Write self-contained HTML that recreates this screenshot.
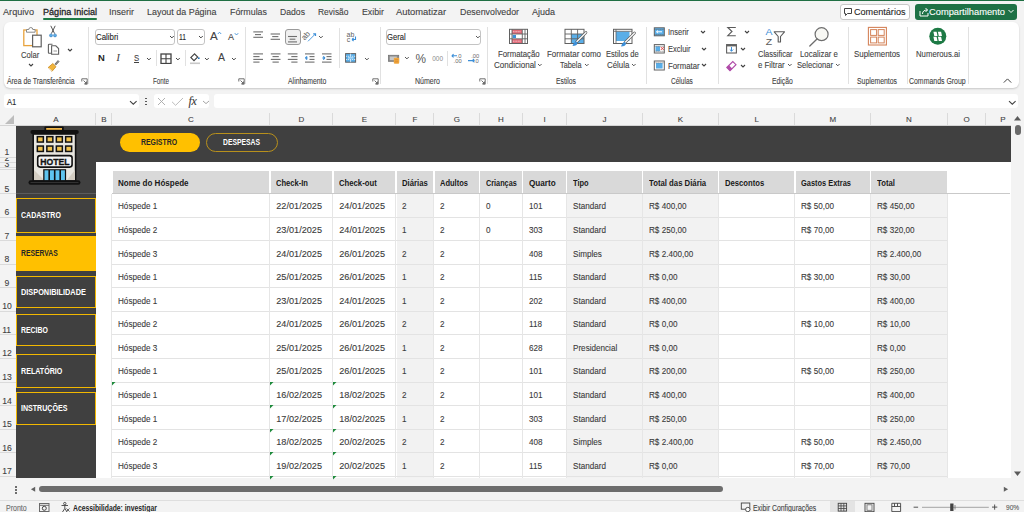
<!DOCTYPE html>
<html><head><meta charset="utf-8"><style>
html,body{margin:0;padding:0;}
body{width:1024px;height:512px;overflow:hidden;position:relative;background:#f3f3f3;font-family:"Liberation Sans",sans-serif;}
body div, body svg{position:absolute;box-sizing:border-box;}
.t{white-space:nowrap;transform-origin:0 0;-webkit-text-stroke:0.1px currentColor;}
</style></head><body>
<div style="left:0px;top:0px;width:1024px;height:1px;background:#1f6f43;"></div>
<div class="t" style="left:3.00px;top:7.78px;font-size:9px;line-height:9px;color:#424242;transform:scaleX(1.0159);">Arquivo</div>
<div class="t" style="left:43.00px;top:7.78px;font-size:9px;line-height:9px;color:#262626;transform:scaleX(1.0087);-webkit-text-stroke:0.3px #262626;">Página Inicial</div>
<div class="t" style="left:109.00px;top:7.78px;font-size:9px;line-height:9px;color:#424242;">Inserir</div>
<div class="t" style="left:147.00px;top:7.78px;font-size:9px;line-height:9px;color:#424242;transform:scaleX(0.9920);">Layout da Página</div>
<div class="t" style="left:230.00px;top:7.78px;font-size:9px;line-height:9px;color:#424242;transform:scaleX(0.9865);">Fórmulas</div>
<div class="t" style="left:280.00px;top:7.78px;font-size:9px;line-height:9px;color:#424242;transform:scaleX(0.9610);">Dados</div>
<div class="t" style="left:318.00px;top:7.78px;font-size:9px;line-height:9px;color:#424242;transform:scaleX(0.9380);">Revisão</div>
<div class="t" style="left:361.50px;top:7.78px;font-size:9px;line-height:9px;color:#424242;transform:scaleX(0.9776);">Exibir</div>
<div class="t" style="left:396.00px;top:7.78px;font-size:9px;line-height:9px;color:#424242;transform:scaleX(1.0413);">Automatizar</div>
<div class="t" style="left:460.00px;top:7.78px;font-size:9px;line-height:9px;color:#424242;transform:scaleX(0.9828);">Desenvolvedor</div>
<div class="t" style="left:532.00px;top:7.78px;font-size:9px;line-height:9px;color:#424242;">Ajuda</div>
<div style="left:43px;top:18px;width:54px;height:2px;background:#1f7a45;border-radius:1px;"></div>
<div style="left:840px;top:3.5px;width:70px;height:16px;background:#fff;border:1px solid #c8c8c8;border-radius:3px;"></div>
<svg style="left:843px;top:7px;" width="10" height="10" viewBox="0 0 10 10"><path d="M1.5 1.5h7v5h-4l-2 2v-2h-1z" fill="none" stroke="#424242" stroke-width="1"/></svg>
<div class="t" style="left:853.50px;top:7.78px;font-size:9px;line-height:9px;color:#262626;transform:scaleX(1.0094);">Comentários</div>
<div style="left:915px;top:3.5px;width:101.5px;height:16px;background:#1e7145;border-radius:3px;"></div>
<svg style="left:918px;top:6px;" width="12" height="12" viewBox="0 0 12 12"><path d="M2 5v5h8V7" fill="none" stroke="#fff" stroke-width="1"/><path d="M4.5 8c0-3 2-4 5-4M7.5 2l2 2-2 2" fill="none" stroke="#fff" stroke-width="1"/></svg>
<div class="t" style="left:929.00px;top:7.78px;font-size:9px;line-height:9px;color:#ffffff;transform:scaleX(1.0335);">Compartilhamento</div>
<svg style="left:1008px;top:9px;" width="6" height="5" viewBox="0 0 6 5"><path d="M0.5 1l2.5 2.5 2.5-2.5" fill="none" stroke="#fff" stroke-width="1"/></svg>
<div style="left:3.5px;top:22px;width:1015px;height:66px;background:#fff;border-radius:6px;box-shadow:0 1px 2px rgba(0,0,0,0.18);"></div>
<div style="left:88px;top:27px;width:1px;height:57px;background:#e1e1e1;"></div>
<div style="left:245px;top:27px;width:1px;height:57px;background:#e1e1e1;"></div>
<div style="left:379.5px;top:27px;width:1px;height:57px;background:#e1e1e1;"></div>
<div style="left:486.5px;top:27px;width:1px;height:57px;background:#e1e1e1;"></div>
<div style="left:645.5px;top:27px;width:1px;height:57px;background:#e1e1e1;"></div>
<div style="left:717.5px;top:27px;width:1px;height:57px;background:#e1e1e1;"></div>
<div style="left:847.5px;top:27px;width:1px;height:57px;background:#e1e1e1;"></div>
<div style="left:907px;top:27px;width:1px;height:57px;background:#e1e1e1;"></div>
<div style="left:968px;top:27px;width:1px;height:57px;background:#e1e1e1;"></div>
<div style="left:156px;top:50px;width:1px;height:16px;background:#e1e1e1;"></div>
<div style="left:185px;top:50px;width:1px;height:16px;background:#e1e1e1;"></div>
<div style="left:338.5px;top:28px;width:1px;height:40px;background:#e1e1e1;"></div>
<div style="left:447px;top:51px;width:1px;height:15px;background:#e1e1e1;"></div>
<div class="t" style="left:7.00px;top:77.30px;font-size:8.5px;line-height:8.5px;color:#424242;transform:scaleX(0.8086);">Área de Transferência</div>
<div class="t" style="left:153.00px;top:77.30px;font-size:8.5px;line-height:8.5px;color:#424242;transform:scaleX(0.7361);">Fonte</div>
<div class="t" style="left:287.70px;top:77.30px;font-size:8.5px;line-height:8.5px;color:#424242;transform:scaleX(0.8105);">Alinhamento</div>
<div class="t" style="left:415.00px;top:77.30px;font-size:8.5px;line-height:8.5px;color:#424242;transform:scaleX(0.8270);">Número</div>
<div class="t" style="left:556.00px;top:77.30px;font-size:8.5px;line-height:8.5px;color:#424242;transform:scaleX(0.7989);">Estilos</div>
<div class="t" style="left:670.50px;top:77.30px;font-size:8.5px;line-height:8.5px;color:#424242;transform:scaleX(0.7690);">Células</div>
<div class="t" style="left:772.00px;top:77.30px;font-size:8.5px;line-height:8.5px;color:#424242;transform:scaleX(0.8003);">Edição</div>
<div class="t" style="left:857.00px;top:77.30px;font-size:8.5px;line-height:8.5px;color:#424242;transform:scaleX(0.8062);">Suplementos</div>
<div class="t" style="left:909.30px;top:77.30px;font-size:8.5px;line-height:8.5px;color:#424242;transform:scaleX(0.8165);">Commands Group</div>
<div style="left:4px;top:93.9px;width:134.6px;height:14.2px;background:#fff;border-radius:3px;"></div>
<div class="t" style="left:6.80px;top:97.47px;font-size:9.6px;line-height:9.6px;color:#262626;transform:scaleX(0.8005);">A1</div>
<svg style="left:129px;top:99.5px;" width="9" height="6" viewBox="0 0 9 6"><path d="M1 1.2L4.3 4.2 7.6 1.2" fill="none" stroke="#424242" stroke-width="1.1"/></svg>
<div style="left:145.1px;top:97.7px;width:1.7px;height:1.7px;background:#424242;border-radius:1px;"></div>
<div style="left:145.1px;top:100.7px;width:1.7px;height:1.7px;background:#424242;border-radius:1px;"></div>
<div style="left:145.1px;top:103.7px;width:1.7px;height:1.7px;background:#424242;border-radius:1px;"></div>
<div style="left:154px;top:93.9px;width:55px;height:14.2px;background:#fff;border-radius:3px;"></div>
<svg style="left:157px;top:96.8px;" width="9" height="9" viewBox="0 0 9 9"><path d="M1 1L8 8M8 1L1 8" stroke="#a8a8a8" stroke-width="0.9"/></svg>
<svg style="left:171px;top:96.5px;" width="13" height="9.5" viewBox="0 0 13 9.5"><path d="M1 4.8L4.6 8.3 12 1" fill="none" stroke="#b4b4b4" stroke-width="0.9"/></svg>
<div class="t" style="left:188.5px;top:95.2px;font-family:'Liberation Serif',serif;font-style:italic;font-size:12px;line-height:12px;color:#3a3a3a;letter-spacing:-0.3px;">fx</div>
<svg style="left:201.5px;top:100px;" width="8" height="5" viewBox="0 0 8 5"><path d="M1 1L4 3.6 7 1" fill="none" stroke="#9a9a9a" stroke-width="0.9"/></svg>
<div style="left:213.8px;top:93.9px;width:804.7px;height:14.2px;background:#fff;border-radius:3px;"></div>
<svg style="left:1008px;top:99.5px;" width="9" height="6" viewBox="0 0 9 6"><path d="M1 1.2L4.3 4.2 7.6 1.2" fill="none" stroke="#424242" stroke-width="1.1"/></svg>
<div style="left:0px;top:112px;width:1012px;height:13.5px;background:#f3f3f3;"></div>
<div style="left:95.4px;top:113px;width:1px;height:12px;background:#dadada;"></div>
<div class="t" style="left:53.33px;top:116.33px;font-size:8px;line-height:8px;color:#424242;">A</div>
<div style="left:111.4px;top:113px;width:1px;height:12px;background:#dadada;"></div>
<div class="t" style="left:101.33px;top:116.33px;font-size:8px;line-height:8px;color:#424242;">B</div>
<div style="left:269.4px;top:113px;width:1px;height:12px;background:#dadada;"></div>
<div class="t" style="left:188.11px;top:116.33px;font-size:8px;line-height:8px;color:#424242;">C</div>
<div style="left:332.4px;top:113px;width:1px;height:12px;background:#dadada;"></div>
<div class="t" style="left:298.61px;top:116.33px;font-size:8px;line-height:8px;color:#424242;">D</div>
<div style="left:395.4px;top:113px;width:1px;height:12px;background:#dadada;"></div>
<div class="t" style="left:361.83px;top:116.33px;font-size:8px;line-height:8px;color:#424242;">E</div>
<div style="left:433.4px;top:113px;width:1px;height:12px;background:#dadada;"></div>
<div class="t" style="left:412.56px;top:116.33px;font-size:8px;line-height:8px;color:#424242;">F</div>
<div style="left:478.9px;top:113px;width:1px;height:12px;background:#dadada;"></div>
<div class="t" style="left:453.64px;top:116.33px;font-size:8px;line-height:8px;color:#424242;">G</div>
<div style="left:521.9px;top:113px;width:1px;height:12px;background:#dadada;"></div>
<div class="t" style="left:498.11px;top:116.33px;font-size:8px;line-height:8px;color:#424242;">H</div>
<div style="left:565.9px;top:113px;width:1px;height:12px;background:#dadada;"></div>
<div class="t" style="left:543.39px;top:116.33px;font-size:8px;line-height:8px;color:#424242;">I</div>
<div style="left:641.9px;top:113px;width:1px;height:12px;background:#dadada;"></div>
<div class="t" style="left:602.50px;top:116.33px;font-size:8px;line-height:8px;color:#424242;">J</div>
<div style="left:717.9px;top:113px;width:1px;height:12px;background:#dadada;"></div>
<div class="t" style="left:677.83px;top:116.33px;font-size:8px;line-height:8px;color:#424242;">K</div>
<div style="left:794.4px;top:113px;width:1px;height:12px;background:#dadada;"></div>
<div class="t" style="left:754.53px;top:116.33px;font-size:8px;line-height:8px;color:#424242;">L</div>
<div style="left:869.9px;top:113px;width:1px;height:12px;background:#dadada;"></div>
<div class="t" style="left:829.42px;top:116.33px;font-size:8px;line-height:8px;color:#424242;">M</div>
<div style="left:946.9px;top:113px;width:1px;height:12px;background:#dadada;"></div>
<div class="t" style="left:906.11px;top:116.33px;font-size:8px;line-height:8px;color:#424242;">N</div>
<div style="left:984.9px;top:113px;width:1px;height:12px;background:#dadada;"></div>
<div class="t" style="left:963.39px;top:116.33px;font-size:8px;line-height:8px;color:#424242;">O</div>
<div style="left:1023.4px;top:113px;width:1px;height:12px;background:#dadada;"></div>
<div class="t" style="left:1000.33px;top:116.33px;font-size:8px;line-height:8px;color:#424242;">P</div>
<div style="left:0px;top:125px;width:1012px;height:1px;background:#d4d4d4;"></div>
<svg style="left:4px;top:114px;" width="11" height="10" viewBox="0 0 11 10"><path d="M10 1L10 10L1 10Z" fill="#bdbdbd"/></svg>
<div style="left:16px;top:125.5px;width:995px;height:352.5px;background:#fff;"></div>
<div style="left:0px;top:125.5px;width:16px;height:352.5px;background:#f3f3f3;"></div>
<div style="left:0px;top:157px;width:16px;height:1px;background:#dadada;"></div>
<div style="left:0px;top:162px;width:16px;height:1px;background:#dadada;"></div>
<div style="left:0px;top:168.5px;width:16px;height:1px;background:#dadada;"></div>
<div style="left:0px;top:193px;width:16px;height:1px;background:#dadada;"></div>
<div style="left:0px;top:216.57999999999998px;width:16px;height:1px;background:#dadada;"></div>
<div style="left:0px;top:240.16px;width:16px;height:1px;background:#dadada;"></div>
<div style="left:0px;top:263.74px;width:16px;height:1px;background:#dadada;"></div>
<div style="left:0px;top:287.32px;width:16px;height:1px;background:#dadada;"></div>
<div style="left:0px;top:310.9px;width:16px;height:1px;background:#dadada;"></div>
<div style="left:0px;top:334.48px;width:16px;height:1px;background:#dadada;"></div>
<div style="left:0px;top:358.06px;width:16px;height:1px;background:#dadada;"></div>
<div style="left:0px;top:381.64px;width:16px;height:1px;background:#dadada;"></div>
<div style="left:0px;top:405.21999999999997px;width:16px;height:1px;background:#dadada;"></div>
<div style="left:0px;top:428.79999999999995px;width:16px;height:1px;background:#dadada;"></div>
<div style="left:0px;top:452.38px;width:16px;height:1px;background:#dadada;"></div>
<div style="left:0px;top:475.96px;width:16px;height:1px;background:#dadada;"></div>
<div style="left:0px;top:167px;width:16px;height:1px;background:#dadada;"></div>
<div style="left:15.5px;top:125.5px;width:1px;height:352.5px;background:#d4d4d4;"></div>
<div class="t" style="left:4.61px;top:148.12px;font-size:8.6px;line-height:8.6px;color:#424242;">1</div>
<div class="t" style="left:4.61px;top:184.92px;font-size:8.6px;line-height:8.6px;color:#424242;">5</div>
<div class="t" style="left:4.61px;top:208.00px;font-size:8.6px;line-height:8.6px;color:#424242;">6</div>
<div class="t" style="left:4.61px;top:231.58px;font-size:8.6px;line-height:8.6px;color:#424242;">7</div>
<div class="t" style="left:4.61px;top:255.16px;font-size:8.6px;line-height:8.6px;color:#424242;">8</div>
<div class="t" style="left:4.61px;top:278.74px;font-size:8.6px;line-height:8.6px;color:#424242;">9</div>
<div class="t" style="left:2.22px;top:302.32px;font-size:8.6px;line-height:8.6px;color:#424242;">10</div>
<div class="t" style="left:2.22px;top:325.90px;font-size:8.6px;line-height:8.6px;color:#424242;">11</div>
<div class="t" style="left:2.22px;top:349.48px;font-size:8.6px;line-height:8.6px;color:#424242;">12</div>
<div class="t" style="left:2.22px;top:373.06px;font-size:8.6px;line-height:8.6px;color:#424242;">13</div>
<div class="t" style="left:2.22px;top:396.64px;font-size:8.6px;line-height:8.6px;color:#424242;">14</div>
<div class="t" style="left:2.22px;top:420.22px;font-size:8.6px;line-height:8.6px;color:#424242;">15</div>
<div class="t" style="left:2.22px;top:443.80px;font-size:8.6px;line-height:8.6px;color:#424242;">16</div>
<div class="t" style="left:2.22px;top:467.38px;font-size:8.6px;line-height:8.6px;color:#424242;">17</div>
<div style="left:0;top:157.5px;width:15px;height:4px;overflow:hidden;"><div class="t" style="left:4.6px;top:-3.2px;font-size:8.6px;line-height:8.6px;color:#424242;">2</div></div>
<div style="left:0;top:162.5px;width:15px;height:4.5px;overflow:hidden;"><div class="t" style="left:4.6px;top:-3.0px;font-size:8.6px;line-height:8.6px;color:#424242;">3</div></div>
<div style="left:16px;top:125.5px;width:994.5px;height:36.6px;background:#404040;"></div>
<div style="left:16px;top:162px;width:80px;height:316px;background:#404040;"></div>
<div style="left:16px;top:193px;width:80px;height:1.2px;background:#5a5a5a;"></div>
<div style="left:1011px;top:112px;width:13px;height:366px;background:#f3f3f3;"></div>
<svg style="left:1013px;top:115px;" width="9" height="6" viewBox="0 0 9 6"><path d="M1 5.5L4.5 1L8 5.5Z" fill="#5a5a5a"/></svg>
<div style="left:1015px;top:125px;width:5.5px;height:10px;background:#6a6a6a;border-radius:3px;"></div>
<svg style="left:1013px;top:471.3px;" width="9" height="6" viewBox="0 0 9 6"><path d="M1 0.5L4.5 5L8 0.5Z" fill="#5a5a5a"/></svg>
<div style="left:0px;top:478.5px;width:1024px;height:33.5px;background:#f3f3f3;"></div>
<div style="left:38.7px;top:486px;width:684.3px;height:6px;background:#6d6d6d;border-radius:3px;"></div>
<svg style="left:30px;top:486px;" width="6" height="6" viewBox="0 0 6 6"><path d="M5.2 0.8L0.9 3.3L5.2 5.8Z" fill="#616161"/></svg>
<svg style="left:1002.5px;top:486px;" width="6" height="6" viewBox="0 0 6 6"><path d="M0.8 0.8L5.1 3.3L0.8 5.8Z" fill="#616161"/></svg>
<div style="left:15.4px;top:485.5px;width:2px;height:2px;background:#424242;border-radius:1px;"></div>
<div style="left:15.4px;top:488.6px;width:2px;height:2px;background:#424242;border-radius:1px;"></div>
<div style="left:15.4px;top:491.5px;width:2px;height:2px;background:#424242;border-radius:1px;"></div>
<div style="left:0px;top:499.8px;width:1024px;height:0.9px;background:#dedede;"></div>
<div class="t" style="left:5.90px;top:503.72px;font-size:8.6px;line-height:8.6px;color:#6a6a6a;transform:scaleX(0.8170);">Pronto</div>
<div class="t" style="left:73.10px;top:503.72px;font-size:8.6px;line-height:8.6px;font-weight:bold;-webkit-text-stroke:0;color:#262626;transform:scaleX(0.7907);">Acessibilidade: investigar</div>
<div class="t" style="left:752.70px;top:503.72px;font-size:8.6px;line-height:8.6px;color:#424242;transform:scaleX(0.7977);">Exibir Configurações</div>
<div style="left:830px;top:500.7px;width:25px;height:11.3px;background:#e3e3e3;"></div>
<div class="t" style="left:1005.80px;top:504.37px;font-size:7.6px;line-height:7.6px;color:#5a5a5a;transform:scaleX(0.8678);">90%</div>
<svg style="left:0px;top:0px;" width="1024" height="512" viewBox="0 0 1024 512"><rect x="39.5" y="503.5" width="9.5" height="8" fill="none" stroke="#6a6a6a" stroke-width="1"/><path d="M39.5 505.3H49" stroke="#6a6a6a" stroke-width="1"/><circle cx="44.3" cy="508.3" r="2" fill="none" stroke="#424242" stroke-width="1"/><circle cx="64.8" cy="503.6" r="1.2" fill="none" stroke="#424242" stroke-width="0.9"/><path d="M61.5 505.5h6.5M64.8 505.5v3M62.5 512l2.3-3.5 2.3 3.5" fill="none" stroke="#424242" stroke-width="0.9"/><path d="M66.5 508.5l3 3M69.5 508.5l-3 3" stroke="#424242" stroke-width="0.8"/><rect x="741.3" y="503" width="8.5" height="6.2" fill="none" stroke="#424242" stroke-width="0.9"/><circle cx="747.8" cy="509.5" r="2.2" fill="#fff" stroke="#424242" stroke-width="0.9"/><rect x="838.2" y="503.3" width="8.4" height="7.8" fill="none" stroke="#424242" stroke-width="0.9"/><path d="M841 503.3V511.1M843.8 503.3V511.1M838.2 505.9H846.6M838.2 508.5H846.6" stroke="#424242" stroke-width="0.8"/><rect x="865" y="503.3" width="9" height="8.4" fill="none" stroke="#424242" stroke-width="0.9"/><rect x="867" y="504.8" width="5" height="5.5" fill="none" stroke="#6a6a6a" stroke-width="0.8"/><path d="M891.8 503.3V511.6H900.6V503.3" fill="none" stroke="#424242" stroke-width="0.9"/><path d="M891.8 503.3H900.6M894.5 503.3V506.5M897.5 503.3V506.5M891.8 506.5H900.6" stroke="#424242" stroke-width="0.9"/><path d="M913.6 507.2H918.1" stroke="#424242" stroke-width="0.9"/><path d="M922 507.3H988.8" stroke="#9a9a9a" stroke-width="0.9"/><rect x="950.2" y="503.5" width="3.3" height="7.5" fill="#424242"/><path d="M955 505V509.5" stroke="#6a6a6a" stroke-width="0.8"/><path d="M992 507.1H997.3M994.65 504.5V509.7" stroke="#424242" stroke-width="0.9"/></svg>
<div style="left:119.5px;top:133px;width:80.5px;height:19px;background:#ffc000;border-radius:9.5px;"></div>
<div class="t" style="left:141.00px;top:138.20px;font-size:8.5px;line-height:8.5px;font-weight:bold;-webkit-text-stroke:0;color:#262626;transform:scaleX(0.8109);">REGISTRO</div>
<div style="left:205.5px;top:133px;width:72.5px;height:19px;background:#404040;border:1px solid #b8901c;border-radius:9.5px;"></div>
<div class="t" style="left:223.00px;top:138.20px;font-size:8.5px;line-height:8.5px;font-weight:bold;-webkit-text-stroke:0;color:#ffffff;transform:scaleX(0.7992);">DESPESAS</div>
<div style="left:16px;top:198px;width:80px;height:35px;background:#404040;border:1.5px solid #f2b800;"></div>
<div class="t" style="left:21.30px;top:212.36px;font-size:8.2px;line-height:8.2px;font-weight:bold;-webkit-text-stroke:0;color:#ffffff;transform:scaleX(0.8598);">CADASTRO</div>
<div style="left:16px;top:236px;width:80px;height:35px;background:#ffc000;"></div>
<div class="t" style="left:21.30px;top:250.36px;font-size:8.2px;line-height:8.2px;font-weight:bold;-webkit-text-stroke:0;color:#262626;transform:scaleX(0.8302);">RESERVAS</div>
<div style="left:16px;top:276px;width:80px;height:31.5px;background:#404040;border:1.5px solid #f2b800;"></div>
<div class="t" style="left:21.30px;top:288.61px;font-size:8.2px;line-height:8.2px;font-weight:bold;-webkit-text-stroke:0;color:#ffffff;transform:scaleX(0.8966);">DISPONIBILIDADE</div>
<div style="left:16px;top:314px;width:80px;height:32px;background:#404040;border:1.5px solid #f2b800;"></div>
<div class="t" style="left:21.30px;top:326.86px;font-size:8.2px;line-height:8.2px;font-weight:bold;-webkit-text-stroke:0;color:#ffffff;transform:scaleX(0.8451);">RECIBO</div>
<div style="left:16px;top:353.75px;width:80px;height:34.25px;background:#404040;border:1.5px solid #f2b800;"></div>
<div class="t" style="left:21.30px;top:367.73px;font-size:8.2px;line-height:8.2px;font-weight:bold;-webkit-text-stroke:0;color:#ffffff;transform:scaleX(0.8688);">RELATÓRIO</div>
<div style="left:16px;top:392px;width:80px;height:32.5px;background:#404040;border:1.5px solid #f2b800;"></div>
<div class="t" style="left:21.30px;top:405.11px;font-size:8.2px;line-height:8.2px;font-weight:bold;-webkit-text-stroke:0;color:#ffffff;transform:scaleX(0.8640);">INSTRUÇÕES</div>
<div style="left:112.7px;top:171px;width:156.6px;height:22px;background:#d9d9d9;"></div>
<div class="t" style="left:118.00px;top:179.12px;font-size:8.6px;line-height:8.6px;font-weight:bold;-webkit-text-stroke:0;color:#1a1a1a;transform:scaleX(0.9351);">Nome do Hóspede</div>
<div style="left:270.7px;top:171px;width:61.6px;height:22px;background:#d9d9d9;"></div>
<div class="t" style="left:276.00px;top:179.12px;font-size:8.6px;line-height:8.6px;font-weight:bold;-webkit-text-stroke:0;color:#1a1a1a;transform:scaleX(0.8811);">Check-In</div>
<div style="left:333.7px;top:171px;width:61.6px;height:22px;background:#d9d9d9;"></div>
<div class="t" style="left:339.00px;top:179.12px;font-size:8.6px;line-height:8.6px;font-weight:bold;-webkit-text-stroke:0;color:#1a1a1a;transform:scaleX(0.8978);">Check-out</div>
<div style="left:396.7px;top:171px;width:36.6px;height:22px;background:#d9d9d9;"></div>
<div class="t" style="left:402.00px;top:179.12px;font-size:8.6px;line-height:8.6px;font-weight:bold;-webkit-text-stroke:0;color:#1a1a1a;transform:scaleX(0.8977);">Diárias</div>
<div style="left:434.7px;top:171px;width:44.1px;height:22px;background:#d9d9d9;"></div>
<div class="t" style="left:440.00px;top:179.12px;font-size:8.6px;line-height:8.6px;font-weight:bold;-webkit-text-stroke:0;color:#1a1a1a;transform:scaleX(0.8748);">Adultos</div>
<div style="left:480.2px;top:171px;width:41.6px;height:22px;background:#d9d9d9;"></div>
<div class="t" style="left:485.50px;top:179.12px;font-size:8.6px;line-height:8.6px;font-weight:bold;-webkit-text-stroke:0;color:#1a1a1a;transform:scaleX(0.8464);">Crianças</div>
<div style="left:523.2px;top:171px;width:42.6px;height:22px;background:#d9d9d9;"></div>
<div class="t" style="left:528.50px;top:179.12px;font-size:8.6px;line-height:8.6px;font-weight:bold;-webkit-text-stroke:0;color:#1a1a1a;transform:scaleX(0.9489);">Quarto</div>
<div style="left:567.2px;top:171px;width:74.6px;height:22px;background:#d9d9d9;"></div>
<div class="t" style="left:572.50px;top:179.12px;font-size:8.6px;line-height:8.6px;font-weight:bold;-webkit-text-stroke:0;color:#1a1a1a;transform:scaleX(0.8678);">Tipo</div>
<div style="left:643.2px;top:171px;width:74.6px;height:22px;background:#d9d9d9;"></div>
<div class="t" style="left:648.50px;top:179.12px;font-size:8.6px;line-height:8.6px;font-weight:bold;-webkit-text-stroke:0;color:#1a1a1a;transform:scaleX(0.9017);">Total das Diária</div>
<div style="left:719.2px;top:171px;width:75.1px;height:22px;background:#d9d9d9;"></div>
<div class="t" style="left:724.50px;top:179.12px;font-size:8.6px;line-height:8.6px;font-weight:bold;-webkit-text-stroke:0;color:#1a1a1a;transform:scaleX(0.8927);">Descontos</div>
<div style="left:795.7px;top:171px;width:74.1px;height:22px;background:#d9d9d9;"></div>
<div class="t" style="left:801.00px;top:179.12px;font-size:8.6px;line-height:8.6px;font-weight:bold;-webkit-text-stroke:0;color:#1a1a1a;transform:scaleX(0.8645);">Gastos Extras</div>
<div style="left:871.2px;top:171px;width:75.6px;height:22px;background:#d9d9d9;"></div>
<div class="t" style="left:876.50px;top:179.12px;font-size:8.6px;line-height:8.6px;font-weight:bold;-webkit-text-stroke:0;color:#1a1a1a;transform:scaleX(0.9006);">Total</div>
<div style="left:112px;top:192.6px;width:898px;height:1.4px;background:#c9c9c9;"></div>
<div style="left:16px;top:193.2px;width:80px;height:1px;background:#5c5c5c;"></div>
<div style="left:396.7px;top:194.2px;width:36.6px;height:284.3px;background:#f2f2f2;"></div>
<div style="left:643.2px;top:194.2px;width:74.6px;height:284.3px;background:#f2f2f2;"></div>
<div style="left:871.2px;top:194.2px;width:75.6px;height:284.3px;background:#f2f2f2;"></div>
<div style="left:567.2px;top:194.2px;width:74.6px;height:284.3px;background:#f2f2f2;"></div>
<div style="left:112px;top:216.57999999999998px;width:835.5px;height:1px;background:#e3e3e3;"></div>
<div style="left:112px;top:240.16px;width:835.5px;height:1px;background:#e3e3e3;"></div>
<div style="left:112px;top:263.74px;width:835.5px;height:1px;background:#e3e3e3;"></div>
<div style="left:112px;top:287.32px;width:835.5px;height:1px;background:#e3e3e3;"></div>
<div style="left:112px;top:310.9px;width:835.5px;height:1px;background:#e3e3e3;"></div>
<div style="left:112px;top:334.48px;width:835.5px;height:1px;background:#e3e3e3;"></div>
<div style="left:112px;top:358.06px;width:835.5px;height:1px;background:#e3e3e3;"></div>
<div style="left:112px;top:381.64px;width:835.5px;height:1px;background:#e3e3e3;"></div>
<div style="left:112px;top:405.21999999999997px;width:835.5px;height:1px;background:#e3e3e3;"></div>
<div style="left:112px;top:428.79999999999995px;width:835.5px;height:1px;background:#e3e3e3;"></div>
<div style="left:112px;top:452.38px;width:835.5px;height:1px;background:#e3e3e3;"></div>
<div style="left:112px;top:475.96px;width:835.5px;height:1px;background:#e3e3e3;"></div>
<div style="left:111.3px;top:194.2px;width:1px;height:284.3px;background:#e6e6e6;"></div>
<div style="left:269.3px;top:194.2px;width:1px;height:284.3px;background:#e6e6e6;"></div>
<div style="left:332.3px;top:194.2px;width:1px;height:284.3px;background:#e6e6e6;"></div>
<div style="left:395.3px;top:194.2px;width:1px;height:284.3px;background:#e6e6e6;"></div>
<div style="left:433.3px;top:194.2px;width:1px;height:284.3px;background:#e6e6e6;"></div>
<div style="left:478.8px;top:194.2px;width:1px;height:284.3px;background:#e6e6e6;"></div>
<div style="left:521.8px;top:194.2px;width:1px;height:284.3px;background:#e6e6e6;"></div>
<div style="left:565.8px;top:194.2px;width:1px;height:284.3px;background:#e6e6e6;"></div>
<div style="left:641.8px;top:194.2px;width:1px;height:284.3px;background:#e6e6e6;"></div>
<div style="left:717.8px;top:194.2px;width:1px;height:284.3px;background:#e6e6e6;"></div>
<div style="left:794.3px;top:194.2px;width:1px;height:284.3px;background:#e6e6e6;"></div>
<div style="left:869.8px;top:194.2px;width:1px;height:284.3px;background:#e6e6e6;"></div>
<div style="left:946.8px;top:194.2px;width:1px;height:284.3px;background:#e6e6e6;"></div>
<div class="t" style="left:118.30px;top:202.36px;font-size:9.14px;line-height:9.14px;color:#3a3a3a;transform:scaleX(0.8900);">Hóspede 1</div>
<div class="t" style="left:276.30px;top:202.36px;font-size:9.14px;line-height:9.14px;color:#3a3a3a;">22/01/2025</div>
<div class="t" style="left:339.30px;top:202.36px;font-size:9.14px;line-height:9.14px;color:#3a3a3a;">24/01/2025</div>
<div class="t" style="left:402.30px;top:202.36px;font-size:9.14px;line-height:9.14px;color:#3a3a3a;transform:scaleX(0.8900);">2</div>
<div class="t" style="left:440.30px;top:202.36px;font-size:9.14px;line-height:9.14px;color:#3a3a3a;transform:scaleX(0.8900);">2</div>
<div class="t" style="left:485.80px;top:202.36px;font-size:9.14px;line-height:9.14px;color:#3a3a3a;transform:scaleX(0.8900);">0</div>
<div class="t" style="left:528.80px;top:202.36px;font-size:9.14px;line-height:9.14px;color:#3a3a3a;transform:scaleX(0.8900);">101</div>
<div class="t" style="left:572.80px;top:202.36px;font-size:9.14px;line-height:9.14px;color:#3a3a3a;transform:scaleX(0.8900);">Standard</div>
<div class="t" style="left:648.80px;top:202.36px;font-size:9.14px;line-height:9.14px;color:#3a3a3a;transform:scaleX(0.8900);">R$ 400,00</div>
<div class="t" style="left:801.30px;top:202.36px;font-size:9.14px;line-height:9.14px;color:#3a3a3a;transform:scaleX(0.8900);">R$ 50,00</div>
<div class="t" style="left:876.80px;top:202.36px;font-size:9.14px;line-height:9.14px;color:#3a3a3a;transform:scaleX(0.8900);">R$ 450,00</div>
<div class="t" style="left:118.30px;top:225.94px;font-size:9.14px;line-height:9.14px;color:#3a3a3a;transform:scaleX(0.8900);">Hóspede 2</div>
<div class="t" style="left:276.30px;top:225.94px;font-size:9.14px;line-height:9.14px;color:#3a3a3a;">23/01/2025</div>
<div class="t" style="left:339.30px;top:225.94px;font-size:9.14px;line-height:9.14px;color:#3a3a3a;">24/01/2025</div>
<div class="t" style="left:402.30px;top:225.94px;font-size:9.14px;line-height:9.14px;color:#3a3a3a;transform:scaleX(0.8900);">1</div>
<div class="t" style="left:440.30px;top:225.94px;font-size:9.14px;line-height:9.14px;color:#3a3a3a;transform:scaleX(0.8900);">2</div>
<div class="t" style="left:485.80px;top:225.94px;font-size:9.14px;line-height:9.14px;color:#3a3a3a;transform:scaleX(0.8900);">0</div>
<div class="t" style="left:528.80px;top:225.94px;font-size:9.14px;line-height:9.14px;color:#3a3a3a;transform:scaleX(0.8900);">303</div>
<div class="t" style="left:572.80px;top:225.94px;font-size:9.14px;line-height:9.14px;color:#3a3a3a;transform:scaleX(0.8900);">Standard</div>
<div class="t" style="left:648.80px;top:225.94px;font-size:9.14px;line-height:9.14px;color:#3a3a3a;transform:scaleX(0.8900);">R$ 250,00</div>
<div class="t" style="left:801.30px;top:225.94px;font-size:9.14px;line-height:9.14px;color:#3a3a3a;transform:scaleX(0.8900);">R$ 70,00</div>
<div class="t" style="left:876.80px;top:225.94px;font-size:9.14px;line-height:9.14px;color:#3a3a3a;transform:scaleX(0.8900);">R$ 320,00</div>
<div class="t" style="left:118.30px;top:249.52px;font-size:9.14px;line-height:9.14px;color:#3a3a3a;transform:scaleX(0.8900);">Hóspede 3</div>
<div class="t" style="left:276.30px;top:249.52px;font-size:9.14px;line-height:9.14px;color:#3a3a3a;">24/01/2025</div>
<div class="t" style="left:339.30px;top:249.52px;font-size:9.14px;line-height:9.14px;color:#3a3a3a;">26/01/2025</div>
<div class="t" style="left:402.30px;top:249.52px;font-size:9.14px;line-height:9.14px;color:#3a3a3a;transform:scaleX(0.8900);">2</div>
<div class="t" style="left:440.30px;top:249.52px;font-size:9.14px;line-height:9.14px;color:#3a3a3a;transform:scaleX(0.8900);">2</div>
<div class="t" style="left:528.80px;top:249.52px;font-size:9.14px;line-height:9.14px;color:#3a3a3a;transform:scaleX(0.8900);">408</div>
<div class="t" style="left:572.80px;top:249.52px;font-size:9.14px;line-height:9.14px;color:#3a3a3a;transform:scaleX(0.8900);">Simples</div>
<div class="t" style="left:648.80px;top:249.52px;font-size:9.14px;line-height:9.14px;color:#3a3a3a;transform:scaleX(0.8900);">R$ 2.400,00</div>
<div class="t" style="left:876.80px;top:249.52px;font-size:9.14px;line-height:9.14px;color:#3a3a3a;transform:scaleX(0.8900);">R$ 2.400,00</div>
<div class="t" style="left:118.30px;top:273.10px;font-size:9.14px;line-height:9.14px;color:#3a3a3a;transform:scaleX(0.8900);">Hóspede 1</div>
<div class="t" style="left:276.30px;top:273.10px;font-size:9.14px;line-height:9.14px;color:#3a3a3a;">25/01/2025</div>
<div class="t" style="left:339.30px;top:273.10px;font-size:9.14px;line-height:9.14px;color:#3a3a3a;">26/01/2025</div>
<div class="t" style="left:402.30px;top:273.10px;font-size:9.14px;line-height:9.14px;color:#3a3a3a;transform:scaleX(0.8900);">1</div>
<div class="t" style="left:440.30px;top:273.10px;font-size:9.14px;line-height:9.14px;color:#3a3a3a;transform:scaleX(0.8900);">2</div>
<div class="t" style="left:528.80px;top:273.10px;font-size:9.14px;line-height:9.14px;color:#3a3a3a;transform:scaleX(0.8900);">115</div>
<div class="t" style="left:572.80px;top:273.10px;font-size:9.14px;line-height:9.14px;color:#3a3a3a;transform:scaleX(0.8900);">Standard</div>
<div class="t" style="left:648.80px;top:273.10px;font-size:9.14px;line-height:9.14px;color:#3a3a3a;transform:scaleX(0.8900);">R$ 0,00</div>
<div class="t" style="left:801.30px;top:273.10px;font-size:9.14px;line-height:9.14px;color:#3a3a3a;transform:scaleX(0.8900);">R$ 30,00</div>
<div class="t" style="left:876.80px;top:273.10px;font-size:9.14px;line-height:9.14px;color:#3a3a3a;transform:scaleX(0.8900);">R$ 30,00</div>
<div class="t" style="left:118.30px;top:296.68px;font-size:9.14px;line-height:9.14px;color:#3a3a3a;transform:scaleX(0.8900);">Hóspede 1</div>
<div class="t" style="left:276.30px;top:296.68px;font-size:9.14px;line-height:9.14px;color:#3a3a3a;">23/01/2025</div>
<div class="t" style="left:339.30px;top:296.68px;font-size:9.14px;line-height:9.14px;color:#3a3a3a;">24/01/2025</div>
<div class="t" style="left:402.30px;top:296.68px;font-size:9.14px;line-height:9.14px;color:#3a3a3a;transform:scaleX(0.8900);">1</div>
<div class="t" style="left:440.30px;top:296.68px;font-size:9.14px;line-height:9.14px;color:#3a3a3a;transform:scaleX(0.8900);">2</div>
<div class="t" style="left:528.80px;top:296.68px;font-size:9.14px;line-height:9.14px;color:#3a3a3a;transform:scaleX(0.8900);">202</div>
<div class="t" style="left:572.80px;top:296.68px;font-size:9.14px;line-height:9.14px;color:#3a3a3a;transform:scaleX(0.8900);">Standard</div>
<div class="t" style="left:648.80px;top:296.68px;font-size:9.14px;line-height:9.14px;color:#3a3a3a;transform:scaleX(0.8900);">R$ 400,00</div>
<div class="t" style="left:876.80px;top:296.68px;font-size:9.14px;line-height:9.14px;color:#3a3a3a;transform:scaleX(0.8900);">R$ 400,00</div>
<div class="t" style="left:118.30px;top:320.26px;font-size:9.14px;line-height:9.14px;color:#3a3a3a;transform:scaleX(0.8900);">Hóspede 2</div>
<div class="t" style="left:276.30px;top:320.26px;font-size:9.14px;line-height:9.14px;color:#3a3a3a;">24/01/2025</div>
<div class="t" style="left:339.30px;top:320.26px;font-size:9.14px;line-height:9.14px;color:#3a3a3a;">26/01/2025</div>
<div class="t" style="left:402.30px;top:320.26px;font-size:9.14px;line-height:9.14px;color:#3a3a3a;transform:scaleX(0.8900);">2</div>
<div class="t" style="left:440.30px;top:320.26px;font-size:9.14px;line-height:9.14px;color:#3a3a3a;transform:scaleX(0.8900);">2</div>
<div class="t" style="left:528.80px;top:320.26px;font-size:9.14px;line-height:9.14px;color:#3a3a3a;transform:scaleX(0.8900);">118</div>
<div class="t" style="left:572.80px;top:320.26px;font-size:9.14px;line-height:9.14px;color:#3a3a3a;transform:scaleX(0.8900);">Standard</div>
<div class="t" style="left:648.80px;top:320.26px;font-size:9.14px;line-height:9.14px;color:#3a3a3a;transform:scaleX(0.8900);">R$ 0,00</div>
<div class="t" style="left:801.30px;top:320.26px;font-size:9.14px;line-height:9.14px;color:#3a3a3a;transform:scaleX(0.8900);">R$ 10,00</div>
<div class="t" style="left:876.80px;top:320.26px;font-size:9.14px;line-height:9.14px;color:#3a3a3a;transform:scaleX(0.8900);">R$ 10,00</div>
<div class="t" style="left:118.30px;top:343.84px;font-size:9.14px;line-height:9.14px;color:#3a3a3a;transform:scaleX(0.8900);">Hóspede 3</div>
<div class="t" style="left:276.30px;top:343.84px;font-size:9.14px;line-height:9.14px;color:#3a3a3a;">25/01/2025</div>
<div class="t" style="left:339.30px;top:343.84px;font-size:9.14px;line-height:9.14px;color:#3a3a3a;">26/01/2025</div>
<div class="t" style="left:402.30px;top:343.84px;font-size:9.14px;line-height:9.14px;color:#3a3a3a;transform:scaleX(0.8900);">1</div>
<div class="t" style="left:440.30px;top:343.84px;font-size:9.14px;line-height:9.14px;color:#3a3a3a;transform:scaleX(0.8900);">2</div>
<div class="t" style="left:528.80px;top:343.84px;font-size:9.14px;line-height:9.14px;color:#3a3a3a;transform:scaleX(0.8900);">628</div>
<div class="t" style="left:572.80px;top:343.84px;font-size:9.14px;line-height:9.14px;color:#3a3a3a;transform:scaleX(0.8900);">Presidencial</div>
<div class="t" style="left:648.80px;top:343.84px;font-size:9.14px;line-height:9.14px;color:#3a3a3a;transform:scaleX(0.8900);">R$ 0,00</div>
<div class="t" style="left:876.80px;top:343.84px;font-size:9.14px;line-height:9.14px;color:#3a3a3a;transform:scaleX(0.8900);">R$ 0,00</div>
<div class="t" style="left:118.30px;top:367.42px;font-size:9.14px;line-height:9.14px;color:#3a3a3a;transform:scaleX(0.8900);">Hóspede 1</div>
<div class="t" style="left:276.30px;top:367.42px;font-size:9.14px;line-height:9.14px;color:#3a3a3a;">25/01/2025</div>
<div class="t" style="left:339.30px;top:367.42px;font-size:9.14px;line-height:9.14px;color:#3a3a3a;">26/01/2025</div>
<div class="t" style="left:402.30px;top:367.42px;font-size:9.14px;line-height:9.14px;color:#3a3a3a;transform:scaleX(0.8900);">1</div>
<div class="t" style="left:440.30px;top:367.42px;font-size:9.14px;line-height:9.14px;color:#3a3a3a;transform:scaleX(0.8900);">2</div>
<div class="t" style="left:528.80px;top:367.42px;font-size:9.14px;line-height:9.14px;color:#3a3a3a;transform:scaleX(0.8900);">101</div>
<div class="t" style="left:572.80px;top:367.42px;font-size:9.14px;line-height:9.14px;color:#3a3a3a;transform:scaleX(0.8900);">Standard</div>
<div class="t" style="left:648.80px;top:367.42px;font-size:9.14px;line-height:9.14px;color:#3a3a3a;transform:scaleX(0.8900);">R$ 200,00</div>
<div class="t" style="left:801.30px;top:367.42px;font-size:9.14px;line-height:9.14px;color:#3a3a3a;transform:scaleX(0.8900);">R$ 50,00</div>
<div class="t" style="left:876.80px;top:367.42px;font-size:9.14px;line-height:9.14px;color:#3a3a3a;transform:scaleX(0.8900);">R$ 250,00</div>
<div class="t" style="left:118.30px;top:391.00px;font-size:9.14px;line-height:9.14px;color:#3a3a3a;transform:scaleX(0.8900);">Hóspede 1</div>
<div class="t" style="left:276.30px;top:391.00px;font-size:9.14px;line-height:9.14px;color:#3a3a3a;">16/02/2025</div>
<div class="t" style="left:339.30px;top:391.00px;font-size:9.14px;line-height:9.14px;color:#3a3a3a;">18/02/2025</div>
<div class="t" style="left:402.30px;top:391.00px;font-size:9.14px;line-height:9.14px;color:#3a3a3a;transform:scaleX(0.8900);">2</div>
<div class="t" style="left:440.30px;top:391.00px;font-size:9.14px;line-height:9.14px;color:#3a3a3a;transform:scaleX(0.8900);">2</div>
<div class="t" style="left:528.80px;top:391.00px;font-size:9.14px;line-height:9.14px;color:#3a3a3a;transform:scaleX(0.8900);">101</div>
<div class="t" style="left:572.80px;top:391.00px;font-size:9.14px;line-height:9.14px;color:#3a3a3a;transform:scaleX(0.8900);">Standard</div>
<div class="t" style="left:648.80px;top:391.00px;font-size:9.14px;line-height:9.14px;color:#3a3a3a;transform:scaleX(0.8900);">R$ 400,00</div>
<div class="t" style="left:876.80px;top:391.00px;font-size:9.14px;line-height:9.14px;color:#3a3a3a;transform:scaleX(0.8900);">R$ 400,00</div>
<div class="t" style="left:118.30px;top:414.58px;font-size:9.14px;line-height:9.14px;color:#3a3a3a;transform:scaleX(0.8900);">Hóspede 1</div>
<div class="t" style="left:276.30px;top:414.58px;font-size:9.14px;line-height:9.14px;color:#3a3a3a;">17/02/2025</div>
<div class="t" style="left:339.30px;top:414.58px;font-size:9.14px;line-height:9.14px;color:#3a3a3a;">18/02/2025</div>
<div class="t" style="left:402.30px;top:414.58px;font-size:9.14px;line-height:9.14px;color:#3a3a3a;transform:scaleX(0.8900);">1</div>
<div class="t" style="left:440.30px;top:414.58px;font-size:9.14px;line-height:9.14px;color:#3a3a3a;transform:scaleX(0.8900);">2</div>
<div class="t" style="left:528.80px;top:414.58px;font-size:9.14px;line-height:9.14px;color:#3a3a3a;transform:scaleX(0.8900);">303</div>
<div class="t" style="left:572.80px;top:414.58px;font-size:9.14px;line-height:9.14px;color:#3a3a3a;transform:scaleX(0.8900);">Standard</div>
<div class="t" style="left:648.80px;top:414.58px;font-size:9.14px;line-height:9.14px;color:#3a3a3a;transform:scaleX(0.8900);">R$ 250,00</div>
<div class="t" style="left:876.80px;top:414.58px;font-size:9.14px;line-height:9.14px;color:#3a3a3a;transform:scaleX(0.8900);">R$ 250,00</div>
<div class="t" style="left:118.30px;top:438.16px;font-size:9.14px;line-height:9.14px;color:#3a3a3a;transform:scaleX(0.8900);">Hóspede 2</div>
<div class="t" style="left:276.30px;top:438.16px;font-size:9.14px;line-height:9.14px;color:#3a3a3a;">18/02/2025</div>
<div class="t" style="left:339.30px;top:438.16px;font-size:9.14px;line-height:9.14px;color:#3a3a3a;">20/02/2025</div>
<div class="t" style="left:402.30px;top:438.16px;font-size:9.14px;line-height:9.14px;color:#3a3a3a;transform:scaleX(0.8900);">2</div>
<div class="t" style="left:440.30px;top:438.16px;font-size:9.14px;line-height:9.14px;color:#3a3a3a;transform:scaleX(0.8900);">2</div>
<div class="t" style="left:528.80px;top:438.16px;font-size:9.14px;line-height:9.14px;color:#3a3a3a;transform:scaleX(0.8900);">408</div>
<div class="t" style="left:572.80px;top:438.16px;font-size:9.14px;line-height:9.14px;color:#3a3a3a;transform:scaleX(0.8900);">Simples</div>
<div class="t" style="left:648.80px;top:438.16px;font-size:9.14px;line-height:9.14px;color:#3a3a3a;transform:scaleX(0.8900);">R$ 2.400,00</div>
<div class="t" style="left:801.30px;top:438.16px;font-size:9.14px;line-height:9.14px;color:#3a3a3a;transform:scaleX(0.8900);">R$ 50,00</div>
<div class="t" style="left:876.80px;top:438.16px;font-size:9.14px;line-height:9.14px;color:#3a3a3a;transform:scaleX(0.8900);">R$ 2.450,00</div>
<div class="t" style="left:118.30px;top:461.74px;font-size:9.14px;line-height:9.14px;color:#3a3a3a;transform:scaleX(0.8900);">Hóspede 3</div>
<div class="t" style="left:276.30px;top:461.74px;font-size:9.14px;line-height:9.14px;color:#3a3a3a;">19/02/2025</div>
<div class="t" style="left:339.30px;top:461.74px;font-size:9.14px;line-height:9.14px;color:#3a3a3a;">20/02/2025</div>
<div class="t" style="left:402.30px;top:461.74px;font-size:9.14px;line-height:9.14px;color:#3a3a3a;transform:scaleX(0.8900);">1</div>
<div class="t" style="left:440.30px;top:461.74px;font-size:9.14px;line-height:9.14px;color:#3a3a3a;transform:scaleX(0.8900);">2</div>
<div class="t" style="left:528.80px;top:461.74px;font-size:9.14px;line-height:9.14px;color:#3a3a3a;transform:scaleX(0.8900);">115</div>
<div class="t" style="left:572.80px;top:461.74px;font-size:9.14px;line-height:9.14px;color:#3a3a3a;transform:scaleX(0.8900);">Standard</div>
<div class="t" style="left:648.80px;top:461.74px;font-size:9.14px;line-height:9.14px;color:#3a3a3a;transform:scaleX(0.8900);">R$ 0,00</div>
<div class="t" style="left:801.30px;top:461.74px;font-size:9.14px;line-height:9.14px;color:#3a3a3a;transform:scaleX(0.8900);">R$ 70,00</div>
<div class="t" style="left:876.80px;top:461.74px;font-size:9.14px;line-height:9.14px;color:#3a3a3a;transform:scaleX(0.8900);">R$ 70,00</div>
<svg style="left:270px;top:381.64px;" width="4" height="4" viewBox="0 0 4 4"><path d="M0 0H3.5L0 3.5Z" fill="#1e8a3c"/></svg>
<svg style="left:333px;top:381.64px;" width="4" height="4" viewBox="0 0 4 4"><path d="M0 0H3.5L0 3.5Z" fill="#1e8a3c"/></svg>
<svg style="left:270px;top:405.21999999999997px;" width="4" height="4" viewBox="0 0 4 4"><path d="M0 0H3.5L0 3.5Z" fill="#1e8a3c"/></svg>
<svg style="left:333px;top:405.21999999999997px;" width="4" height="4" viewBox="0 0 4 4"><path d="M0 0H3.5L0 3.5Z" fill="#1e8a3c"/></svg>
<svg style="left:270px;top:428.79999999999995px;" width="4" height="4" viewBox="0 0 4 4"><path d="M0 0H3.5L0 3.5Z" fill="#1e8a3c"/></svg>
<svg style="left:333px;top:428.79999999999995px;" width="4" height="4" viewBox="0 0 4 4"><path d="M0 0H3.5L0 3.5Z" fill="#1e8a3c"/></svg>
<svg style="left:270px;top:452.38px;" width="4" height="4" viewBox="0 0 4 4"><path d="M0 0H3.5L0 3.5Z" fill="#1e8a3c"/></svg>
<svg style="left:333px;top:452.38px;" width="4" height="4" viewBox="0 0 4 4"><path d="M0 0H3.5L0 3.5Z" fill="#1e8a3c"/></svg>
<svg style="left:270px;top:475.96px;" width="4" height="4" viewBox="0 0 4 4"><path d="M0 0H3.5L0 3.5Z" fill="#1e8a3c"/></svg>
<svg style="left:333px;top:475.96px;" width="4" height="4" viewBox="0 0 4 4"><path d="M0 0H3.5L0 3.5Z" fill="#1e8a3c"/></svg>
<svg style="left:112px;top:381.64px;" width="4" height="4" viewBox="0 0 4 4"><path d="M0 0H3.5L0 3.5Z" fill="#1e8a3c"/></svg>
<svg style="left:26px;top:124px;" width="56" height="64" viewBox="0 0 56 64"><rect x="18.4" y="2.5" width="19.4" height="4.6" rx="1" fill="#111"/><rect x="20.2" y="4" width="15.8" height="1.8" fill="#f2b84b"/><rect x="7.2" y="10" width="42.4" height="47" fill="#e8e6e0" stroke="#111" stroke-width="1.6"/><path d="M8 46 L8 56 L18 56 Z" fill="#d3cdc2"/><path d="M49 46 L49 56 L41 56 Z" fill="#d3cdc2"/><rect x="4.4" y="6" width="48.4" height="4" rx="2" fill="#111"/><rect x="11.35" y="12.65" width="6" height="5.4" fill="#f3c44f" stroke="#111" stroke-width="1.5"/><rect x="11.35" y="22.05" width="6" height="5.4" fill="#f3c44f" stroke="#111" stroke-width="1.5"/><rect x="20.85" y="12.65" width="6" height="5.4" fill="#f3c44f" stroke="#111" stroke-width="1.5"/><rect x="20.85" y="22.05" width="6" height="5.4" fill="#f3c44f" stroke="#111" stroke-width="1.5"/><rect x="30.35" y="12.65" width="6" height="5.4" fill="#f3c44f" stroke="#111" stroke-width="1.5"/><rect x="30.35" y="22.05" width="6" height="5.4" fill="#f3c44f" stroke="#111" stroke-width="1.5"/><rect x="39.65" y="12.65" width="6" height="5.4" fill="#f3c44f" stroke="#111" stroke-width="1.5"/><rect x="39.65" y="22.05" width="6" height="5.4" fill="#f3c44f" stroke="#111" stroke-width="1.5"/><rect x="11.7" y="31.6" width="34.4" height="11.5" rx="2.5" fill="#f4f4f4" stroke="#111" stroke-width="1.6"/><text x="28.9" y="40.7" text-anchor="middle" font-family="Liberation Sans" font-weight="bold" font-size="9.8" fill="#111" stroke="#111" stroke-width="0.35" textLength="29.2" lengthAdjust="spacingAndGlyphs">HOTEL</text><rect x="17.2" y="45.2" width="22.9" height="11.5" fill="#111"/><rect x="18.5" y="46.3" width="3.9" height="10" fill="#5ec4ef"/><rect x="24.0" y="46.3" width="3.9" height="10" fill="#5ec4ef"/><rect x="29.5" y="46.3" width="3.9" height="10" fill="#5ec4ef"/><rect x="35.0" y="46.3" width="3.9" height="10" fill="#5ec4ef"/><rect x="2.5" y="56.2" width="52" height="4.5" rx="2.2" fill="#111"/><rect x="4.5" y="58" width="48" height="0.8" fill="#3a3a3a"/></svg>
<svg style="left:20px;top:24px;" width="24" height="26" viewBox="0 0 24 26"><rect x="3.8" y="6" width="13.2" height="15.6" fill="#fff" stroke="#e8a33d" stroke-width="1.3"/><path d="M6.5 8.2V5.5h2.3a2 2 0 0 1 4 0h2.3v2.7z" fill="#fff" stroke="#8a8a8a" stroke-width="1"/><rect x="12.6" y="11.2" width="8.6" height="11.6" fill="#fff" stroke="#616161" stroke-width="1.2"/></svg>
<div class="t" style="left:20.80px;top:50.82px;font-size:8.6px;line-height:8.6px;color:#424242;transform:scaleX(0.8905);">Colar</div>
<svg style="left:27.8px;top:63.3px;" width="6" height="4" viewBox="0 0 6 4"><path d="M1 1l2 2 2-2" fill="none" stroke="#424242" stroke-width="1.1"/></svg>
<svg style="left:48px;top:25px;" width="10" height="13" viewBox="0 0 10 13"><path d="M2.8 0.8L6.6 8.6M7.2 0.8L3.4 8.6" stroke="#424242" stroke-width="0.9" fill="none"/><circle cx="3" cy="10.4" r="1.5" fill="#5aaee8" stroke="#3c7fc0" stroke-width="0.6"/><circle cx="7" cy="10.4" r="1.5" fill="#5aaee8" stroke="#3c7fc0" stroke-width="0.6"/></svg>
<svg style="left:47px;top:42px;" width="13" height="13" viewBox="0 0 13 13"><path d="M5.5 2.2H2.2a0.8 0.8 0 0 0-0.8 0.8v7.5a0.8 0.8 0 0 0 0.8 0.8H4" fill="none" stroke="#616161" stroke-width="1.1"/><path d="M4.6 3.8h4.2l2.8 2.8v5.6H4.6z" fill="#fff" stroke="#616161" stroke-width="1.1"/><path d="M6.5 9h3.5" stroke="#9a9a9a" stroke-width="1"/></svg>
<svg style="left:66.8px;top:47.5px;" width="6" height="4" viewBox="0 0 6 4"><path d="M1 1l2 2 2-2" fill="none" stroke="#424242" stroke-width="1.1"/></svg>
<svg style="left:47px;top:59px;" width="13" height="13" viewBox="0 0 13 13"><path d="M7.8 5.2l3.2-3.6 1 1-3.4 3.6" fill="#9a9a9a" stroke="#616161" stroke-width="0.9"/><path d="M1.2 8.5l4.6-4 3.2 3.2-4 4.6z" fill="#f0b43c" stroke="#c98a20" stroke-width="0.8"/><path d="M2 9.2l2.8 2.8" stroke="#fff" stroke-width="0.7"/></svg>
<svg style="left:81px;top:78px;" width="7" height="7" viewBox="0 0 7 7"><path d="M0.8 3.5V0.8h5.4v5.4H3.5" fill="none" stroke="#616161" stroke-width="0.9"/><path d="M2.5 2.5l3 3M3.5 5.5h2v-2" fill="none" stroke="#616161" stroke-width="0.9"/></svg>
<svg style="left:238px;top:78px;" width="7" height="7" viewBox="0 0 7 7"><path d="M0.8 3.5V0.8h5.4v5.4H3.5" fill="none" stroke="#616161" stroke-width="0.9"/><path d="M2.5 2.5l3 3M3.5 5.5h2v-2" fill="none" stroke="#616161" stroke-width="0.9"/></svg>
<svg style="left:372px;top:78px;" width="7" height="7" viewBox="0 0 7 7"><path d="M0.8 3.5V0.8h5.4v5.4H3.5" fill="none" stroke="#616161" stroke-width="0.9"/><path d="M2.5 2.5l3 3M3.5 5.5h2v-2" fill="none" stroke="#616161" stroke-width="0.9"/></svg>
<svg style="left:479px;top:78px;" width="7" height="7" viewBox="0 0 7 7"><path d="M0.8 3.5V0.8h5.4v5.4H3.5" fill="none" stroke="#616161" stroke-width="0.9"/><path d="M2.5 2.5l3 3M3.5 5.5h2v-2" fill="none" stroke="#616161" stroke-width="0.9"/></svg>
<div style="left:94.7px;top:29.4px;width:80px;height:15.2px;background:#fff;border:1px solid #c4c4c4;border-radius:3px;"></div>
<div class="t" style="left:95.80px;top:34.06px;font-size:8.2px;line-height:8.2px;color:#262626;transform:scaleX(0.9639);">Calibri</div>
<svg style="left:168.5px;top:34.949999999999996px;" width="5.8" height="3.9" viewBox="0 0 5.8 3.9"><path d="M1 1l1.9 1.9 1.9 -1.9" fill="none" stroke="#424242" stroke-width="1.0"/></svg>
<div style="left:177px;top:29.4px;width:28.2px;height:15.2px;background:#fff;border:1px solid #c4c4c4;border-radius:3px;"></div>
<div class="t" style="left:178.70px;top:34.06px;font-size:8.2px;line-height:8.2px;color:#262626;transform:scaleX(0.8223);">11</div>
<svg style="left:198.29999999999998px;top:34.949999999999996px;" width="5.8" height="3.9" viewBox="0 0 5.8 3.9"><path d="M1 1l1.9 1.9 1.9 -1.9" fill="none" stroke="#424242" stroke-width="1.0"/></svg>
<div class="t" style="left:209.60px;top:31.21px;font-size:11.8px;line-height:11.8px;color:#424242;transform:scaleX(0.9783);">A</div>
<svg style="left:216.5px;top:31px;" width="5" height="4" viewBox="0 0 5 4"><path d="M0.8 3L2.5 1.2 4.2 3" fill="none" stroke="#3c8fd8" stroke-width="0.9"/></svg>
<div class="t" style="left:227.90px;top:33.21px;font-size:9.2px;line-height:9.2px;color:#424242;transform:scaleX(0.9778);">A</div>
<svg style="left:233.5px;top:31.5px;" width="5" height="4" viewBox="0 0 5 4"><path d="M0.8 1.2L2.5 3 4.2 1.2" fill="none" stroke="#3c8fd8" stroke-width="0.9"/></svg>
<div class="t" style="left:98.20px;top:54.40px;font-size:8.5px;line-height:8.5px;font-weight:bold;-webkit-text-stroke:0;color:#262626;transform:scaleX(1.1078);">N</div>
<div class="t" style="left:116.5px;top:52.5px;font-family:'Liberation Serif',serif;font-style:italic;font-size:10px;line-height:10px;color:#424242;">I</div>
<div class="t" style="left:133.60px;top:53.81px;font-size:9.2px;line-height:9.2px;color:#424242;transform:scaleX(0.8474);">S</div>
<div style="left:133.5px;top:62px;width:5.5px;height:1px;background:#424242;"></div>
<svg style="left:145.9px;top:56.55px;" width="5.8" height="3.9" viewBox="0 0 5.8 3.9"><path d="M1 1l1.9 1.9 1.9 -1.9" fill="none" stroke="#424242" stroke-width="1.0"/></svg>
<svg style="left:159.5px;top:52.5px;" width="12" height="11" viewBox="0 0 12 11"><rect x="1" y="1" width="10" height="9.5" fill="none" stroke="#424242" stroke-width="1.3"/><path d="M6 1V10.5M1 5.75H11" stroke="#424242" stroke-width="1.1"/></svg>
<svg style="left:174.9px;top:56.55px;" width="5.8" height="3.9" viewBox="0 0 5.8 3.9"><path d="M1 1l1.9 1.9 1.9 -1.9" fill="none" stroke="#424242" stroke-width="1.0"/></svg>
<svg style="left:188.5px;top:51.5px;" width="12" height="13" viewBox="0 0 12 13"><path d="M5.5 1.8L1.8 5.5 5 8.7 8.7 5z" fill="none" stroke="#424242" stroke-width="1.1"/><circle cx="9.8" cy="6.2" r="0.9" fill="#1e6fb8"/><rect x="1" y="10.5" width="10" height="1.6" fill="#c8c8c8"/></svg>
<svg style="left:203.7px;top:56.55px;" width="5.8" height="3.9" viewBox="0 0 5.8 3.9"><path d="M1 1l1.9 1.9 1.9 -1.9" fill="none" stroke="#424242" stroke-width="1.0"/></svg>
<div class="t" style="left:218.00px;top:52.60px;font-size:10.4px;line-height:10.4px;color:#424242;transform:scaleX(1.0091);">A</div>
<svg style="left:230.9px;top:56.55px;" width="5.8" height="3.9" viewBox="0 0 5.8 3.9"><path d="M1 1l1.9 1.9 1.9 -1.9" fill="none" stroke="#424242" stroke-width="1.0"/></svg>
<div style="left:284.5px;top:29.3px;width:16px;height:15.6px;background:#f0f0f0;border:1px solid #9a9a9a;border-radius:3px;"></div>
<svg style="left:0px;top:0px;" width="1024" height="100" viewBox="0 0 1024 100"><path d="M253.3 31.9H263" stroke="#6e6e6e" stroke-width="1.1"/><path d="M255 34.6H261" stroke="#6e6e6e" stroke-width="1.1"/><path d="M253.3 37.3H263" stroke="#6e6e6e" stroke-width="1.1"/><path d="M270.6 34H280" stroke="#6e6e6e" stroke-width="1.1"/><path d="M272.2 36.6H278.4" stroke="#6e6e6e" stroke-width="1.1"/><path d="M270.6 39.3H280" stroke="#6e6e6e" stroke-width="1.1"/><path d="M288 36.5H297" stroke="#6e6e6e" stroke-width="1.1"/><path d="M289.6 39.2H295.4" stroke="#6e6e6e" stroke-width="1.1"/><path d="M288 41.9H297" stroke="#6e6e6e" stroke-width="1.1"/><path d="M253.3 53.9H263.0" stroke="#6e6e6e" stroke-width="1.1"/><path d="M253.3 56.6H259.5" stroke="#6e6e6e" stroke-width="1.1"/><path d="M253.3 59.4H263.0" stroke="#6e6e6e" stroke-width="1.1"/><path d="M253.3 62.1H259.5" stroke="#6e6e6e" stroke-width="1.1"/><path d="M270.8 53.9H280.5" stroke="#6e6e6e" stroke-width="1.1"/><path d="M272.5 56.6H278.8" stroke="#6e6e6e" stroke-width="1.1"/><path d="M270.8 59.4H280.5" stroke="#6e6e6e" stroke-width="1.1"/><path d="M272.5 62.1H278.8" stroke="#6e6e6e" stroke-width="1.1"/><path d="M287.8 53.9H297.5" stroke="#6e6e6e" stroke-width="1.1"/><path d="M291.3 56.6H297.5" stroke="#6e6e6e" stroke-width="1.1"/><path d="M287.8 59.4H297.5" stroke="#6e6e6e" stroke-width="1.1"/><path d="M291.3 62.1H297.5" stroke="#6e6e6e" stroke-width="1.1"/><path d="M305 53.9H314.5" stroke="#6e6e6e" stroke-width="1.1"/><path d="M309.5 56.6H314.5" stroke="#6e6e6e" stroke-width="1.1"/><path d="M309.5 59.4H314.5" stroke="#6e6e6e" stroke-width="1.1"/><path d="M305 62.1H314.5" stroke="#6e6e6e" stroke-width="1.1"/><path d="M322 53.9H331.5" stroke="#6e6e6e" stroke-width="1.1"/><path d="M326.5 56.6H331.5" stroke="#6e6e6e" stroke-width="1.1"/><path d="M326.5 59.4H331.5" stroke="#6e6e6e" stroke-width="1.1"/><path d="M322 62.1H331.5" stroke="#6e6e6e" stroke-width="1.1"/><path d="M307.8 58L305.3 58M305.3 58l1.8-1.6M305.3 58l1.8 1.6" stroke="#3c8fd8" stroke-width="1.1" fill="none"/><path d="M322.3 58H325M325 58l-1.8-1.6M325 58l-1.8 1.6" stroke="#3c8fd8" stroke-width="1.1" fill="none"/><path d="M308 41.3L315.3 34" stroke="#3c8fd8" stroke-width="0.9"/><path d="M313.2 33.8H315.5V36.1" stroke="#3c8fd8" stroke-width="1.2" fill="none"/><text x="0" y="0" font-family="Liberation Sans" font-size="8" fill="#5a5a5a" transform="translate(304.8,40.8) rotate(-50)">ab</text><text x="346.6" y="37.3" font-family="Liberation Sans" font-size="7" fill="#616161">ab</text><text x="346.8" y="41.8" font-family="Liberation Sans" font-size="7" fill="#616161">c</text><path d="M355.5 36.5V39.5H352M352 39.5l1.6-1.5M352 39.5l1.6 1.5" stroke="#3c8fd8" stroke-width="1.1" fill="none"/><rect x="345.6" y="53.6" width="10" height="8.6" fill="#5aaee8" stroke="#616161" stroke-width="1"/><path d="M346 56.3H355.3M346 59.5H355.3" stroke="#fff" stroke-width="0.7" stroke-dasharray="1.2 0.8"/><path d="M348 57.9H353.5" stroke="#fff" stroke-width="0.8"/><path d="M350.6 53.6V56M350.6 59.8V62.2" stroke="#fff" stroke-width="0.7"/></svg>
<svg style="left:318.3px;top:34.949999999999996px;" width="5.8" height="3.9" viewBox="0 0 5.8 3.9"><path d="M1 1l1.9 1.9 1.9 -1.9" fill="none" stroke="#424242" stroke-width="0.9"/></svg>
<svg style="left:363.6px;top:56.65px;" width="5.8" height="3.9" viewBox="0 0 5.8 3.9"><path d="M1 1l1.9 1.9 1.9 -1.9" fill="none" stroke="#424242" stroke-width="0.9"/></svg>
<div style="left:385.7px;top:29.4px;width:95.8px;height:15.2px;background:#fff;border:1px solid #c4c4c4;border-radius:3px;"></div>
<div class="t" style="left:387.00px;top:34.06px;font-size:8.2px;line-height:8.2px;color:#262626;transform:scaleX(0.9326);">Geral</div>
<svg style="left:474.6px;top:34.949999999999996px;" width="5.8" height="3.9" viewBox="0 0 5.8 3.9"><path d="M1 1l1.9 1.9 1.9 -1.9" fill="none" stroke="#424242" stroke-width="0.9"/></svg>
<svg style="left:0px;top:0px;" width="1024" height="100" viewBox="0 0 1024 100"><rect x="388.3" y="55.2" width="10.5" height="6.2" fill="#8a8a8a" stroke="#6a6a6a" stroke-width="0.6"/><rect x="389.8" y="56.5" width="7" height="3.6" fill="#c8c8c8"/><rect x="393.8" y="57.8" width="5.4" height="6" rx="1" fill="#f0a840"/><path d="M394.8 59.8h3.4M394.8 61.8h3.4" stroke="#d07820" stroke-width="0.6"/><text x="415.5" y="62.6" font-family="Liberation Sans" font-size="12.2" fill="#5a5a5a" textLength="10.5" lengthAdjust="spacingAndGlyphs">%</text><text x="432.2" y="60.8" font-family="Liberation Sans" font-size="7" fill="#8a8a8a" textLength="10.8" lengthAdjust="spacingAndGlyphs">000</text><path d="M457 55.8H451.8M451.8 55.8l1.8-1.6M451.8 55.8l1.8 1.6" stroke="#3c8fd8" stroke-width="1.1" fill="none"/><text x="456.6" y="58.2" font-family="Liberation Sans" font-size="5.8" fill="#6a6a6a">.0</text><text x="453.6" y="63.2" font-family="Liberation Sans" font-size="5.8" fill="#6a6a6a">.00</text><text x="471.2" y="58.2" font-family="Liberation Sans" font-size="5.8" fill="#6a6a6a">.00</text><path d="M468 60.6H474.6M474.6 60.6l-1.8-1.6M474.6 60.6l-1.8 1.6" stroke="#3c8fd8" stroke-width="1.1" fill="none"/><text x="473.8" y="63.2" font-family="Liberation Sans" font-size="5.8" fill="#6a6a6a">.0</text></svg>
<svg style="left:403.6px;top:56.25px;" width="5.8" height="3.9" viewBox="0 0 5.8 3.9"><path d="M1 1l1.9 1.9 1.9 -1.9" fill="none" stroke="#424242" stroke-width="0.9"/></svg>
<svg style="left:0px;top:0px;" width="1024" height="100" viewBox="0 0 1024 100"><rect x="512" y="29.5" width="10" height="4.5" fill="#e06a78"/><rect x="512" y="39" width="10" height="4.5" fill="#e06a78"/><rect x="512.5" y="35" width="3.5" height="3" fill="#3c8fd8"/><rect x="509.5" y="29.3" width="18" height="14.2" fill="none" stroke="#616161" stroke-width="1"/><path d="M509.5 34H527.5M509.5 38.8H527.5M512 29.3V43.5M522.3 29.3V43.5M525 29.3V43.5" stroke="#616161" stroke-width="0.9"/><path d="M513 31.7h8M513 41.2h8" stroke="#fff" stroke-width="0.6" stroke-dasharray="1 0.6"/><rect x="571" y="34" width="13" height="9.5" fill="#5aaee8"/><rect x="565" y="29.3" width="19" height="14.2" fill="none" stroke="#616161" stroke-width="1"/><path d="M565 34H584M565 38.8H584M571.3 29.3V43.5M577.6 29.3V43.5" stroke="#616161" stroke-width="0.9"/><path d="M586 32.5L576.5 42" stroke="#616161" stroke-width="2.6" stroke-linecap="round"/><path d="M586 32.5L576.5 42" stroke="#fff" stroke-width="1.2" stroke-linecap="round"/><path d="M576.5 41.5c-1.8 0-3 1.5-4 4.5 3 0 5-1 5-3z" fill="#3c8fd8"/><rect x="616" y="31.5" width="13.5" height="9.5" fill="#5aaee8"/><rect x="613.5" y="29.3" width="18.5" height="14.2" fill="none" stroke="#616161" stroke-width="1"/><path d="M613.5 31.3H632M616 29.3V43.5" stroke="#616161" stroke-width="0.8"/><path d="M634.5 33L625 42.5" stroke="#616161" stroke-width="2.6" stroke-linecap="round"/><path d="M634.5 33L625 42.5" stroke="#fff" stroke-width="1.2" stroke-linecap="round"/><path d="M625 42c-1.8 0-3 1.5-4 4.5 3 0 5-1 5-3z" fill="#3c8fd8"/></svg>
<div class="t" style="left:497.60px;top:49.92px;font-size:8.6px;line-height:8.6px;color:#424242;transform:scaleX(0.9088);">Formatação</div>
<div class="t" style="left:493.60px;top:60.52px;font-size:8.6px;line-height:8.6px;color:#424242;transform:scaleX(0.9324);">Condicional</div>
<svg style="left:537.0px;top:62.9px;" width="5.6" height="3.8" viewBox="0 0 5.6 3.8"><path d="M1 1l1.8 1.8 1.8 -1.8" fill="none" stroke="#424242" stroke-width="0.9"/></svg>
<div class="t" style="left:547.00px;top:49.92px;font-size:8.6px;line-height:8.6px;color:#424242;transform:scaleX(0.9262);">Formatar como</div>
<div class="t" style="left:559.60px;top:60.52px;font-size:8.6px;line-height:8.6px;color:#424242;transform:scaleX(0.8519);">Tabela</div>
<svg style="left:583.5px;top:62.9px;" width="5.6" height="3.8" viewBox="0 0 5.6 3.8"><path d="M1 1l1.8 1.8 1.8 -1.8" fill="none" stroke="#424242" stroke-width="0.9"/></svg>
<div class="t" style="left:606.00px;top:49.92px;font-size:8.6px;line-height:8.6px;color:#424242;transform:scaleX(0.8797);">Estilos de</div>
<div class="t" style="left:606.60px;top:60.52px;font-size:8.6px;line-height:8.6px;color:#424242;transform:scaleX(0.9188);">Célula</div>
<svg style="left:630.5px;top:62.9px;" width="5.6" height="3.8" viewBox="0 0 5.6 3.8"><path d="M1 1l1.8 1.8 1.8 -1.8" fill="none" stroke="#424242" stroke-width="0.9"/></svg>
<svg style="left:0px;top:0px;" width="1024" height="100" viewBox="0 0 1024 100"><rect x="654.3" y="27.8" width="10" height="8" fill="#5aaee8" stroke="#616161" stroke-width="1"/><path d="M654.3 29.5H664.3M654.3 34.5H664.3" stroke="#616161" stroke-width="0.7" stroke-dasharray="1.2 0.8"/><path d="M662 31.8H656.5M656.5 31.8l1.6-1.4M656.5 31.8l1.6 1.4" stroke="#fff" stroke-width="1" fill="none"/><rect x="654.3" y="44.6" width="10" height="8.4" fill="none" stroke="#616161" stroke-width="1"/><rect x="655.5" y="46.3" width="4.5" height="5" fill="#5aaee8"/><path d="M654.3 46.3H664.3M654.3 51.3H664.3" stroke="#616161" stroke-width="0.7" stroke-dasharray="1.2 0.8"/><path d="M660.8 47l3 3M663.8 47l-3 3" stroke="#e04040" stroke-width="0.9"/><rect x="654.3" y="61" width="10" height="9" fill="#fff" stroke="#616161" stroke-width="1"/><rect x="656" y="63" width="6.6" height="5.5" fill="#5aaee8"/><path d="M654.3 62.8H664.3" stroke="#616161" stroke-width="0.7" stroke-dasharray="1.2 0.8"/><path d="M735.8 27.5H727.8L732 31.5L727.8 35.7H735.8" fill="none" stroke="#5a5a5a" stroke-width="1.1"/><rect x="726.6" y="44.6" width="9.8" height="8.4" fill="#fff" stroke="#616161" stroke-width="1.1"/><path d="M726.6 45.6H736.4" stroke="#616161" stroke-width="1.6"/><path d="M731.5 47V51.2M729.8 49.5l1.7 1.7 1.7-1.7" stroke="#3c8fd8" stroke-width="1" fill="none"/><path d="M726.8 67.5L732.8 61.5L736 64.7L730 70.7z" fill="#fff" stroke="#b04aa8" stroke-width="1.1"/><path d="M726.8 67.5L729 65.3L732.2 68.5L730 70.7z" fill="#b04aa8"/><text x="765.6" y="35.4" font-family="Liberation Sans" font-size="9.8" fill="#3c8fd8" textLength="7" lengthAdjust="spacingAndGlyphs">A</text><text x="765.8" y="45.2" font-family="Liberation Sans" font-size="9.8" fill="#5a5a5a" textLength="6.4" lengthAdjust="spacingAndGlyphs">Z</text><path d="M774.2 31.8H784.5L780.5 36.5V42L778.2 42V36.5z" fill="none" stroke="#5a5a5a" stroke-width="1.1" stroke-linejoin="round"/><circle cx="821.6" cy="34.2" r="6.5" fill="#f8f8f4" stroke="#6e6e6e" stroke-width="1.2"/><path d="M817 39L809.8 46" stroke="#6e6e6e" stroke-width="1.3" stroke-linecap="round"/><rect x="868.4" y="27.4" width="18" height="17.6" fill="none" stroke="#d4845a" stroke-width="1.1"/><rect x="870.6" y="29.6" width="6" height="5.8" fill="none" stroke="#d4845a" stroke-width="1"/><rect x="870.6" y="37.1" width="6" height="5.8" fill="none" stroke="#d4845a" stroke-width="1"/><rect x="878.2" y="29.6" width="6" height="5.8" fill="none" stroke="#d4845a" stroke-width="1"/><rect x="878.2" y="37.1" width="6" height="5.8" fill="none" stroke="#d4845a" stroke-width="1"/><circle cx="937.8" cy="36.2" r="8.5" fill="#1e7a45"/><path d="M933.4 31.8h3.2l0.9 4.2h-3.2zM937.9 31.8h3.2l0.9 4.2h-3.2zM933.4 36.8h3.2l0.9 4.2h-3.2zM937.9 36.8h3.2l0.9 4.2h-3.2z" fill="#fff"/><path d="M1003.8 82.6L1007.5 78.9L1011.2 82.6" fill="none" stroke="#424242" stroke-width="1"/></svg>
<div class="t" style="left:667.60px;top:28.12px;font-size:8.6px;line-height:8.6px;color:#424242;transform:scaleX(0.8705);">Inserir</div>
<div class="t" style="left:667.60px;top:44.92px;font-size:8.6px;line-height:8.6px;color:#424242;transform:scaleX(0.8720);">Excluir</div>
<div class="t" style="left:667.60px;top:61.82px;font-size:8.6px;line-height:8.6px;color:#424242;transform:scaleX(0.9059);">Formatar</div>
<svg style="left:700.0px;top:29.6px;" width="6" height="4.0" viewBox="0 0 6 4.0"><path d="M1 1l2.0 2.0 2.0 -2.0" fill="none" stroke="#424242" stroke-width="1.1"/></svg>
<svg style="left:701.0px;top:46.8px;" width="6" height="4.0" viewBox="0 0 6 4.0"><path d="M1 1l2.0 2.0 2.0 -2.0" fill="none" stroke="#424242" stroke-width="1.1"/></svg>
<svg style="left:701.0px;top:63.3px;" width="6" height="4.0" viewBox="0 0 6 4.0"><path d="M1 1l2.0 2.0 2.0 -2.0" fill="none" stroke="#424242" stroke-width="1.1"/></svg>
<svg style="left:744.0px;top:30.0px;" width="6" height="4.0" viewBox="0 0 6 4.0"><path d="M1 1l2.0 2.0 2.0 -2.0" fill="none" stroke="#424242" stroke-width="1.1"/></svg>
<svg style="left:740.0px;top:46.8px;" width="6" height="4.0" viewBox="0 0 6 4.0"><path d="M1 1l2.0 2.0 2.0 -2.0" fill="none" stroke="#424242" stroke-width="1.1"/></svg>
<svg style="left:740.0px;top:63.7px;" width="6" height="4.0" viewBox="0 0 6 4.0"><path d="M1 1l2.0 2.0 2.0 -2.0" fill="none" stroke="#424242" stroke-width="1.1"/></svg>
<div class="t" style="left:758.00px;top:49.72px;font-size:8.6px;line-height:8.6px;color:#424242;transform:scaleX(0.8724);">Classificar</div>
<div class="t" style="left:758.40px;top:60.52px;font-size:8.6px;line-height:8.6px;color:#424242;transform:scaleX(0.9161);">e Filtrar</div>
<svg style="left:787.0px;top:63.0px;" width="5.6" height="3.8" viewBox="0 0 5.6 3.8"><path d="M1 1l1.8 1.8 1.8 -1.8" fill="none" stroke="#424242" stroke-width="0.9"/></svg>
<div class="t" style="left:800.00px;top:49.72px;font-size:8.6px;line-height:8.6px;color:#424242;transform:scaleX(0.9113);">Localizar e</div>
<div class="t" style="left:796.90px;top:60.52px;font-size:8.6px;line-height:8.6px;color:#424242;transform:scaleX(0.8884);">Selecionar</div>
<svg style="left:835.0px;top:63.0px;" width="5.6" height="3.8" viewBox="0 0 5.6 3.8"><path d="M1 1l1.8 1.8 1.8 -1.8" fill="none" stroke="#424242" stroke-width="0.9"/></svg>
<div class="t" style="left:854.30px;top:49.72px;font-size:8.6px;line-height:8.6px;color:#424242;transform:scaleX(0.9184);">Suplementos</div>
<div class="t" style="left:915.60px;top:49.72px;font-size:8.6px;line-height:8.6px;color:#424242;transform:scaleX(0.9025);">Numerous.ai</div>
</body></html>
